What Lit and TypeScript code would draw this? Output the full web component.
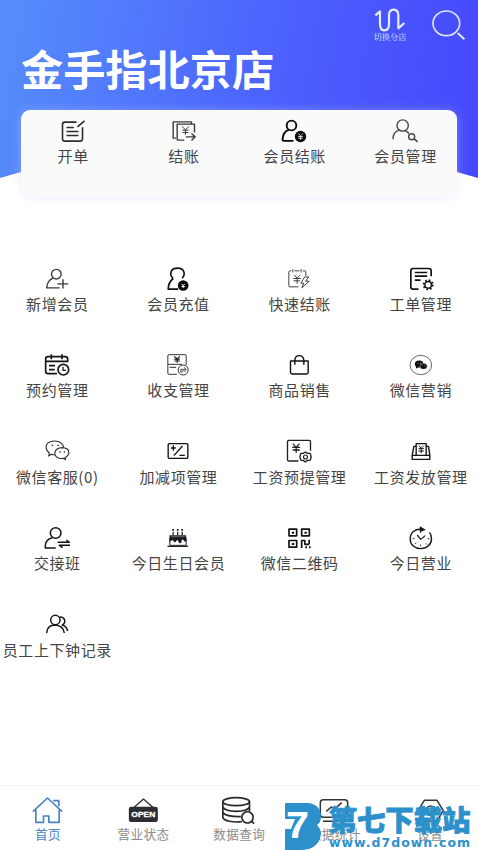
import { LitElement, html, css, svg, SVGTemplateResult } from "lit";
import { customElement, property } from "lit/decorators.js";

interface Item {
  label: string;
  box: string;
  art: SVGTemplateResult;
}

const quick: Item[] = [
  {
    label: "开单",
    box: "178.5 352.5 78 78",
    art: svg`<g stroke="#2c2c2c" stroke-width="4.8"><path d="M228 365H193q-7 0-7 7V415q0 7 7 7H239q7 0 7-7V380M252 361L231 379M198 381H220M198 393H234M198 405H234"/></g>`,
  },
  {
    label: "结账",
    box: "511.5 352.5 78 78",
    art: svg`<g stroke="#3a3a3a" stroke-width="4.2"><path d="M526 413H518V364H573V370M551 419H533Q530 419 530 416V371H582V396M556 409H583M573 399L584 409L573 420"/><path d="M545 378L555 388L565 378M555 388V403M546 389H564M546 396H564" stroke-width="3"/></g>`,
  },
  {
    label: "会员结账",
    box: "844.5 352.5 78 78",
    art: svg`<g stroke="#080808" stroke-width="5.6"><circle cx="876" cy="375" r="14.5"/><path d="M868 388C855 392 850 404 849 416Q849 421 856 421H882"/></g><circle cx="903" cy="408" r="17" fill="#080808"/><path d="M896 399L903 406L910 399M903 406V418M896 408H910M896 413H910" stroke="#eee" stroke-width="2.5"/>`,
  },
  {
    label: "会员管理",
    box: "1176 352.5 78 78",
    art: svg`<g stroke="#484848" stroke-width="4.2"><circle cx="1208" cy="375" r="17"/><path d="M1179 416Q1179 394 1198 389M1215 391Q1223 393 1227 399"/><circle cx="1235" cy="409" r="9" stroke-width="4.4"/><path d="M1242 415L1253 424" stroke-width="5"/></g>`,
  },
];

const tools: Item[] = [
  {
    label: "新增会员",
    box: "132 16.5 78 78",
    art: svg`<g stroke="#3b3b3b" stroke-width="4.2"><circle cx="169" cy="41" r="14.5"/><path d="M159 53Q142 60 140 82H179M172 70H205M189 56V84"/></g>`,
  },
  {
    label: "会员充值",
    box: "496.5 16.5 78 78",
    art: svg`<g stroke="#111" stroke-width="4.8"><path d="M521 54C508 42 513 23 534 23C555 23 559 42 548 53M521 54Q507 65 506 86H536"/></g><circle cx="551" cy="75" r="16" fill="#080808"/><path d="M546 70L551 75L556 70M551 74V83M546 78H556" stroke="#fff" stroke-width="3"/>`,
  },
  {
    label: "快速结账",
    box: "145.5 16.5 78 78",
    art: svg`<g stroke="#333" stroke-width="2.8"><path d="M183 79H157Q154 79 154 76V35Q154 31 158 31H161M171 31H186M196 31H202Q205 31 205 34V46M166 26V36M191 26V36M170 43L179 53L188 43M179 53V70M168 54H190M168 61H188M201 50L190 68H199L193 82L215 62H204L214 49Z"/></g>`,
  },
  {
    label: "工单管理",
    box: "508.5 16.5 78 78",
    art: svg`<g stroke="#111" stroke-width="5"><path d="M540 86H524Q517 86 517 79V31Q517 24 524 24H571Q578 24 578 31V47M529 36H566M529 47H566M529 59H546"/><circle cx="569" cy="73" r="10" stroke-width="4.4"/><circle cx="569" cy="73" r="14" stroke-width="5" stroke-dasharray="5 6"/></g>`,
  },
  {
    label: "预约管理",
    box: "132 276 78 78",
    art: svg`<g stroke="#151515" stroke-width="5"><path d="M171 341H144Q137 341 137 334V297Q137 290 144 290H196Q203 290 203 297V307M138 304H203M154 283V298M186 283V298M147 317H165M147 329H164"/><circle cx="190" cy="329" r="16"/><path d="M189 320V331H198" stroke-width="3.8"/></g>`,
  },
  {
    label: "收支管理",
    box: "496.5 276 78 78",
    art: svg`<g stroke="#333" stroke-width="3"><path d="M532 343H509Q505 343 505 339V288Q505 284 509 284H557Q560 284 560 288V315M505 313H548M510 322H530"/><path d="M524 289L533 297L541 289M533 296V308M524 298H541M525 303H541" stroke="#111" stroke-width="3.2"/><circle cx="551" cy="330" r="15"/><path d="M542 328H560L553 322M560 333H542L549 339" stroke-width="2.6"/></g>`,
  },
  {
    label: "商品销售",
    box: "145.5 276 78 78",
    art: svg`<g stroke="#111" stroke-width="4.2"><path d="M159 303H212V337Q212 342 207 342H164Q159 342 159 337ZM172 314V301Q173 287 185 287Q198 287 199 301V314"/></g>`,
  },
  {
    label: "微信营销",
    box: "508.5 276 78 78",
    art: svg`<ellipse cx="547" cy="315" rx="32.5" ry="29" stroke="#333" stroke-width="2.2"/><ellipse cx="542" cy="312" rx="13" ry="10.5" fill="#0c0c0c"/><path d="M533 317L532 326L542 320" fill="#0c0c0c"/><ellipse cx="555" cy="319" rx="11" ry="9" fill="#0c0c0c" stroke="#fff" stroke-width="1.2"/><path d="M537 310h3M545 309h3M551 317h2M558 317h2" stroke="#bbb" stroke-width="2.5"/>`,
  },
  {
    label: "微信客服(0)",
    box: "132 9 78 78",
    art: svg`<g stroke="#2c2c2c" stroke-width="3.3"><path d="M164 59Q158 60 154 58L146 63L148 54C135 44 135 27 149 21C169 13 188 22 191 37"/><path d="M197 74L195 68C212 59 211 39 187 38C160 39 158 64 178 70Q184 71 190 70Z"/></g><g fill="#222"><circle cx="157" cy="31" r="2.5"/><circle cx="174" cy="31" r="2.5"/><circle cx="180" cy="51" r="2.4"/><circle cx="193" cy="51" r="2.4"/></g>`,
  },
  {
    label: "加减项管理",
    box: "496.5 9 78 78",
    art: svg`<g stroke="#111" stroke-width="4"><rect x="506" y="26" width="59" height="44" rx="3"/><path d="M514 39H529M521.5 31V47M549 33L523 62M540 61H556"/></g>`,
  },
  {
    label: "工资预提管理",
    box: "145.5 9 78 78",
    art: svg`<g stroke="#202020" stroke-width="4"><path d="M183 78H154Q150 78 150 74V20Q150 16 154 16H215Q219 16 219 20V47"/><path d="M166 26L176 37L186 26M176 36V53M164 37H188M165 45H187"/><path d="M204 51L210 55H218L221 66L218 76H210L204 81L197 76H190L187 66L190 55H197Z"/><circle cx="204" cy="66" r="6" stroke-width="3.4"/></g>`,
  },
  {
    label: "工资发放管理",
    box: "508.5 9 78 78",
    art: svg`<g stroke="#151515" stroke-width="4.2"><path d="M533 60V26H563V60M533 34H526L521 61V73H574V61L570 34H563M521 61H574"/><path d="M541 32L548 40L556 32M548 40V54M540 41H556M540 48H556" stroke-width="3"/></g>`,
  },
  {
    label: "交接班",
    box: "132 270 78 78",
    art: svg`<g stroke="#151515" stroke-width="4.6"><circle cx="167" cy="294" r="16"/><path d="M157 308Q136 313 136 334V339H167M173 322H208L199 315M210 331H178L188 338" /></g>`,
  },
  {
    label: "今日生日会员",
    box: "496.5 270 78 78",
    art: svg`<g stroke="#24242c" stroke-width="4"><path d="M521 290V300M534.5 290V300M548 290V300"/><path d="M521 282v5M534.5 282v5M548 282v5" stroke-width="5.5"/><path d="M504 334H566" stroke-width="4"/><path d="M511 309V331H560V309" stroke-width="3"/></g><path d="M510 301H560V319Q555 323 552 315Q549 311 546 317V322Q541 329 537 320Q534 312 531 317Q527 326 522 319Q519 312 516 317Q512 321 510 318Z" fill="#1b1b22"/><path d="M515 305H556" stroke="#888" stroke-width="2"/>`,
  },
  {
    label: "微信二维码",
    box: "145.5 270 78 78",
    art: svg`<g stroke="#111" stroke-width="5"><rect x="154.5" y="282.5" width="23" height="20"/><rect x="192.5" y="282.5" width="23" height="20"/><rect x="154.5" y="316.5" width="23" height="20"/><path d="M192.5 339V316.5H202V328H215M215 314V328M217 334V340M206 334V340"/></g><path d="M163 290h7v6h-7zM201 290h7v6h-7zM163 324h7v6h-7z" fill="#111"/>`,
  },
  {
    label: "今日营业",
    box: "508.5 270 78 78",
    art: svg`<g stroke="#171717" stroke-width="4.2"><path d="M551 283C529 280 515 294 515 311C515 330 529 341 547 341C566 341 579 328 579 311C579 303 577 297 573 292"/><path d="M536 300L547 313L560 302" stroke-width="3.5"/><path d="M546 290v4M546 329v5M522 311h6M567 311h6M529 327l4-4M562 325l4 4" stroke-width="2.6"/></g><path d="M544 274L562 284L544 292Z" fill="#171717"/>`,
  },
  {
    label: "员工上下钟记录",
    box: "132 18 78 78",
    art: svg`<g stroke="#181818" stroke-width="4.6"><circle cx="166" cy="45" r="14"/><path d="M140 84Q141 62 163 60Q190 61 193 84M179 36C196 35 199 53 187 60Q200 64 203 78"/></g>`,
  },
];

const tabs: Item[] = [
  {
    label: "首页",
    box: "97.5 46 93 93",
    art: svg`<g stroke="#4a82c4" stroke-width="5"><path d="M100 96L144 55L188 96M109 90V128H132V109H148V128H179V90M161 63H178V80"/></g>`,
  },
  {
    label: "营业状态",
    box: "384.5 46 93 93",
    art: svg`<path d="M403 83L431 58L459 83" stroke="#303035" stroke-width="4"/><rect x="387" y="81" width="87" height="46" rx="7" fill="#2c2d33"/><text x="430.5" y="112" text-anchor="middle" textLength="72" lengthAdjust="spacingAndGlyphs" class="sign">OPEN</text>`,
  },
  {
    label: "数据查询",
    box: "670.5 46 93 93",
    art: svg`<g stroke="#292929" stroke-width="5"><ellipse cx="710" cy="66" rx="40" ry="12"/><path d="M670 66V114C674 124 700 129 727 126M750 66V94M670 83Q678 95 710 95Q742 95 750 83M670 99Q682 112 724 111"/><circle cx="744" cy="113" r="17" fill="#fff"/><path d="M756 125L764 132"/></g>`,
  },
  {
    label: "数据统计",
    box: "148 46 93 93",
    art: svg`<g stroke="#333" stroke-width="4.6"><rect x="152" y="60" width="82" height="53" rx="9"/><path d="M170 95L185 82L194 89L216 69M160 125H214"/></g>`,
  },
  {
    label: "设置",
    box: "436 46 93 93",
    art: svg`<g stroke="#333" stroke-width="4.6"><path d="M464 62H502L521 93L502 124H464L445 93Z"/><circle cx="483" cy="93" r="14"/></g>`,
  },
];

@customElement("menu-item")
class MenuItem extends LitElement {
  @property({ attribute: false }) item!: Item;

  static styles = css`
    :host {
      display: flex;
      flex-direction: column;
      align-items: center;
      min-width: 0;
    }
    svg {
      display: block;
      width: var(--icon, 26px);
      height: var(--icon, 26px);
      overflow: visible;
      flex: none;
    }
    .label {
      margin-top: var(--gap, 3px);
      font-size: var(--size, 15px);
      line-height: 20px;
      letter-spacing: var(--track, 0.6px);
      margin-right: calc(var(--track, 0.6px) * -1);
      white-space: nowrap;
    }
    .sign {
      font: 900 24px "Liberation Sans", Arial, sans-serif;
      fill: #fff;
      stroke: #fff;
      stroke-width: 1;
    }
  `;

  render() {
    return html`
      <svg viewBox=${this.item.box} fill="none" stroke-linejoin="round">${this.item.art}</svg>
      <span class="label">${this.item.label}</span>
    `;
  }
}

@customElement("app-root")
class AppRoot extends LitElement {
  static styles = css`
    :host {
      display: flex;
      flex-direction: column;
      position: relative;
      width: 100%;
      height: 850px;
      overflow: hidden;
      background: #fff;
      color: #444;
      font-family: "Noto Sans CJK SC", sans-serif;
    }
    .hero {
      height: 215px;
      flex: none;
      display: flex;
      flex-direction: column;
      position: relative;
    }
    .backdrop {
      position: absolute;
      inset: 0 0 37px;
      background: linear-gradient(100deg, #568efb 0%, #4f70fc 38%, #4a5bfd 65%, #4648fb 100%);
      clip-path: polygon(0 0, 100% 0, 100% 100%, 95.6% 172px, 50% 160px, 4.4% 172px, 0 100%);
    }
    .actions {
      position: relative;
      display: flex;
      justify-content: flex-end;
      align-items: flex-start;
      height: 42px;
      padding: 8px 13px 0 0;
      box-sizing: border-box;
      gap: 23px;
      flex: none;
    }
    .switch {
      display: flex;
      flex-direction: column;
      align-items: center;
      width: 36px;
      color: #dfe3ff;
      font: 8.2px/10px "Noto Serif CJK SC", "Noto Sans CJK SC", serif;
      white-space: nowrap;
    }
    .switch svg {
      width: 32px;
      height: 24px;
    }
    .search {
      width: 34px;
      height: 32px;
      margin-top: 0.5px;
    }
    h1 {
      position: relative;
      margin: 0 0 0 21px;
      height: 68px;
      font-size: 42.2px;
      line-height: 51px;
      font-weight: 700;
      color: #fff;
      flex: none;
    }
    .card {
      position: relative;
      display: grid;
      grid-template-columns: repeat(4, 110.8px);
      justify-content: center;
      width: 436.5px;
      height: 86px;
      padding-top: 7.5px;
      box-sizing: border-box;
      margin-left: 20.8px;
      border-radius: 9px;
      background: #fafafb;
      box-shadow: 0 1px 11px rgba(205, 215, 255, 0.4);
      --gap: 2.8px;
    }
    .grid {
      display: grid;
      grid-template-columns: repeat(4, 121.2px);
      grid-auto-rows: 86.4px;
      margin: 50.5px 0 0 -3.6px;
      width: 485px;
      flex: 1;
      --gap: 2.6px;
    }
    .tabs {
      display: grid;
      grid-template-columns: repeat(5, 95.6px);
      height: 65px;
      padding-top: 9px;
      box-sizing: border-box;
      border-top: 1px solid #f3f3f3;
      color: #8b8b8b;
      flex: none;
      --icon: 31px;
      --gap: -2px;
      --size: 12.6px;
      --track: 0.4px;
    }
    .active {
      color: #4a82c4;
    }
    .mark {
      position: absolute;
      left: 285px;
      top: 800px;
      width: 193px;
      height: 50px;
      overflow: visible;
    }
    .mark .name {
      font: 900 28px "Noto Sans CJK SC", sans-serif;
      stroke: #2c91cb;
      stroke-width: 0.8;
    }
    .mark .seven {
      font: 700 37px "Liberation Sans", sans-serif;
    }
    .mark .site {
      font: 700 12.5px "DejaVu Sans", sans-serif;
    }
  `;

  render() {
    return html`
      <header class="hero">
        <div class="backdrop"></div>
        <div class="actions">
          <div class="switch">
            <svg viewBox="0 0 96 72" fill="none" stroke="#e8ecff" stroke-width="6.5" stroke-linejoin="round">
              <path d="M4 22L18 10V49Q18 67 31 67Q45 67 45 49V22Q45 5 59 5Q73 5 73 22V61L91 45" />
            </svg>
            <span>切换分店</span>
          </div>
          <svg class="search" viewBox="0 0 102 96" fill="none" stroke="#e0e4ff" stroke-width="5">
            <ellipse cx="46" cy="43" rx="40" ry="37" />
            <path d="M80 72L100 91" stroke-width="6" />
          </svg>
        </div>
        <h1>金手指北京店</h1>
        <section class="card">${quick.map((i) => html`<menu-item .item=${i}></menu-item>`)}</section>
      </header>
      <main class="grid">${tools.map((i) => html`<menu-item .item=${i}></menu-item>`)}</main>
      <nav class="tabs">
        ${tabs.map((i, n) => html`<menu-item class=${n === 0 ? "active" : ""} .item=${i}></menu-item>`)}
      </nav>
      <svg class="mark" viewBox="0 0 193 50" fill="#2c91cb">
        <path d="M0 3H24Q36 5 36 17Q36 22 32 25Q36 29 36 34Q34 49 17 50H0V29H6L10 19H0Z" />
        <text class="seven" x="1" y="38" fill="#fff" textLength="23" lengthAdjust="spacingAndGlyphs">7</text>
        <text class="name" x="43.5" y="30.5" textLength="142" lengthAdjust="spacingAndGlyphs">第七下载站</text>
        <text class="site" x="44" y="47" textLength="141">www.d7down.com</text>
      </svg>
    `;
  }
}
